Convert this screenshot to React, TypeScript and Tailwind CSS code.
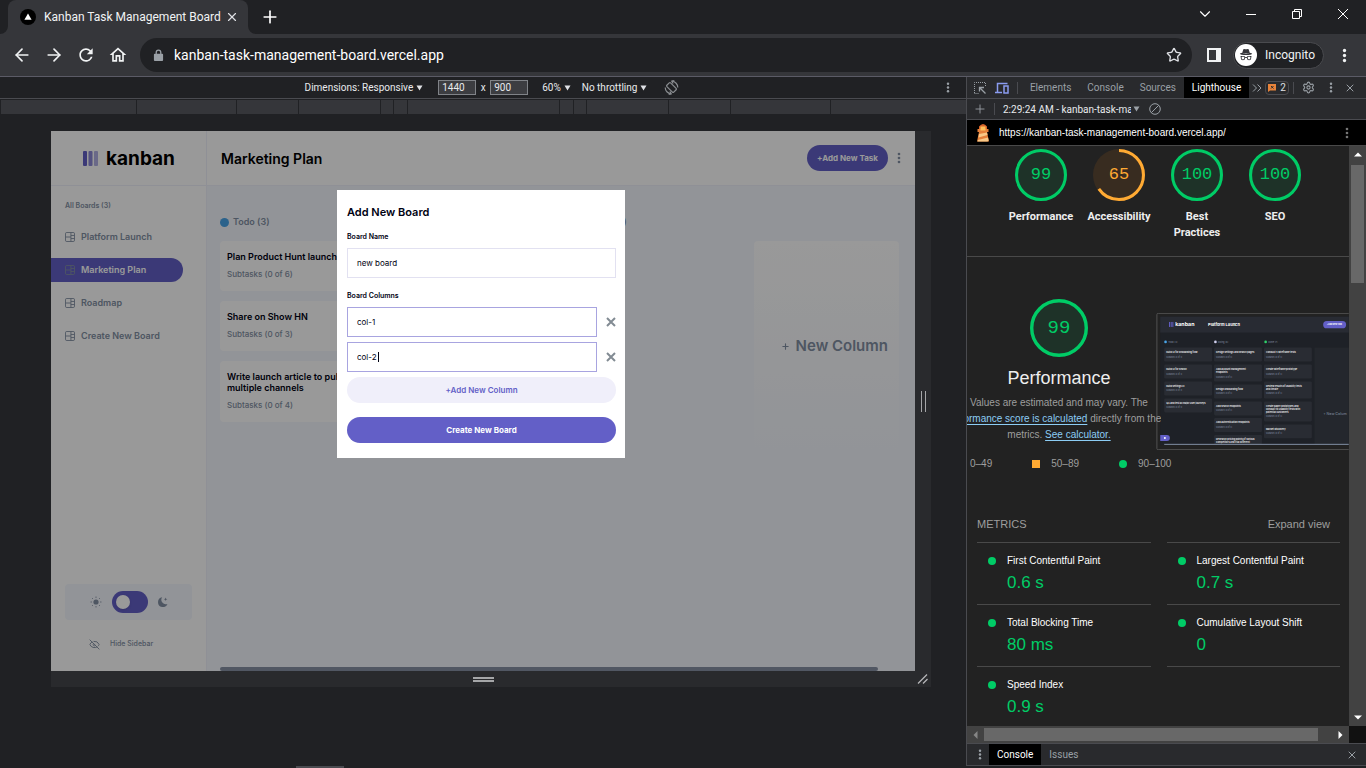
import type { ReactNode } from 'react';
import { ArrowLeft, ArrowRight, ChevronDown, EyeOff, Plus, Settings, Star, X } from 'lucide-react';
import { BsIncognito } from 'react-icons/bs';
import { MdLock, MdOutlineHome, MdRefresh } from 'react-icons/md';

interface Task {
  title: string;
  subtasks: string;
}

interface Metric {
  name: string;
  value: string;
}

const boards = ['Platform Launch', 'Marketing Plan', 'Roadmap', 'Create New Board'];

const tasks: Task[] = [
  { title: 'Plan Product Hunt launch', subtasks: 'Subtasks (0 of 6)' },
  { title: 'Share on Show HN', subtasks: 'Subtasks (0 of 3)' },
  { title: 'Write launch article to publish on multiple channels', subtasks: 'Subtasks (0 of 4)' },
];

const rulerSegments = [137, 100, 62, 82, 12, 13, 153, 13, 12, 82, 62, 100, 137];

const leftMetrics: Metric[] = [
  { name: 'First Contentful Paint', value: '0.6 s' },
  { name: 'Total Blocking Time', value: '80 ms' },
  { name: 'Speed Index', value: '0.9 s' },
];

const rightMetrics: Metric[] = [
  { name: 'Largest Contentful Paint', value: '0.7 s' },
  { name: 'Cumulative Layout Shift', value: '0' },
];

function Dots({ className, r = 2 }: { className: string; r?: number }) {
  return (
    <svg viewBox="0 0 6 18" className={className} fill="currentColor">
      <circle cx="3" cy="3" r={r} />
      <circle cx="3" cy="9" r={r} />
      <circle cx="3" cy="15" r={r} />
    </svg>
  );
}

function Caret({ className = 'text-[#dfe1e5]' }: { className?: string }) {
  return (
    <svg viewBox="0 0 7 6" className={`h-[6px] w-[7px] shrink-0 ${className}`} fill="currentColor">
      <path d="M0.5 0.5h6L3.5 5.5z" />
    </svg>
  );
}

/* ---------- Browser chrome ---------- */

function TabStrip() {
  return (
    <div className="flex h-[34px] shrink-0 items-stretch bg-[#202124] pl-2">
      <div className="relative flex w-[240px] items-center rounded-t-lg bg-[#35363a] pl-3 pr-2">
        <svg viewBox="0 0 16 16" className="h-4 w-4 shrink-0">
          <circle cx="8" cy="8" r="8" fill="#000" />
          <path d="M8 4.5l3.6 6.2H4.4z" fill="#fff" />
        </svg>
        <span className="ml-2 flex-1 whitespace-nowrap text-[12px] text-[#f1f3f4]">Kanban Task Management Board</span>
        <button aria-label="Close tab">
          <X className="h-4 w-4 p-px text-[#dfe1e5]" />
        </button>
        <svg viewBox="0 0 8 8" className="absolute -left-2 bottom-0 h-2 w-2" fill="#35363a">
          <path d="M8 0v8H0a8 8 0 0 0 8-8z" />
        </svg>
        <svg viewBox="0 0 8 8" className="absolute -right-2 bottom-0 h-2 w-2" fill="#35363a">
          <path d="M0 0v8h8a8 8 0 0 1-8-8z" />
        </svg>
      </div>
      <button aria-label="New tab" className="ml-3">
        <Plus className="h-5 w-5 text-white" strokeWidth={2} />
      </button>
      <div className="mb-[6px] ml-auto flex items-center text-white">
        <button aria-label="Search tabs" className="flex w-[46px] justify-center">
          <ChevronDown className="h-[18px] w-[18px]" strokeWidth={1.5} />
        </button>
        <button aria-label="Minimize" className="flex w-[46px] justify-center">
          <svg viewBox="0 0 10 10" className="h-[10px] w-[10px]">
            <path d="M0 5.5h10" stroke="currentColor" />
          </svg>
        </button>
        <button aria-label="Restore" className="flex w-[46px] justify-center">
          <svg viewBox="0 0 10 10" className="h-[10px] w-[10px]" fill="none" stroke="currentColor">
            <path d="M0.5 2.5h7v7h-7zM2.5 2.5v-2h7v7h-2" />
          </svg>
        </button>
        <button aria-label="Close window" className="flex w-[46px] justify-center">
          <svg viewBox="0 0 10 10" className="h-[10px] w-[10px]" fill="none" stroke="currentColor">
            <path d="M0 0l10 10M10 0L0 10" />
          </svg>
        </button>
      </div>
    </div>
  );
}

function AddressBar() {
  return (
    <div className="flex h-[43px] shrink-0 items-center border-b border-[#5b5b66] bg-[#35363a] pr-[19px] text-[#f1f3f4]">
      <button aria-label="Back" className="ml-3">
        <ArrowLeft className="h-5 w-5" />
      </button>
      <button aria-label="Forward" className="ml-3">
        <ArrowRight className="h-5 w-5" />
      </button>
      <button aria-label="Reload" className="ml-3">
        <MdRefresh className="h-5 w-5" />
      </button>
      <button aria-label="Home" className="ml-3">
        <MdOutlineHome className="h-5 w-5" />
      </button>
      <div className="ml-3 flex h-[34px] flex-1 items-center rounded-full bg-[#202124] pl-3 pr-[10px]">
        <svg viewBox="0 0 12 14" className="mx-px h-[13px] w-[11px] shrink-0" fill="#9aa0a6">
          <path fillRule="evenodd" d="M6 0.500a3.200 3.200 0 0 0-3.200 3.200V5H2a1 1 0 0 0-1 1v6a1 1 0 0 0 1 1h8a1 1 0 0 0 1-1V6a1 1 0 0 0-1-1h-.8V3.700A3.200 3.200 0 0 0 6 0.500zM4.200 5V3.700a1.800 1.800 0 0 1 3.600 0V5z" />
        </svg>
        <input
          type="text"
          aria-label="Address"
          defaultValue="kanban-task-management-board.vercel.app"
          className="ml-[9px] min-w-0 flex-1 bg-transparent text-[14px] text-white outline-none"
        />
        <button aria-label="Bookmark">
          <Star className="h-4 w-4 text-[#dfe1e5]" />
        </button>
      </div>
      <button aria-label="Side panel" className="ml-[15px]">
        <svg viewBox="0 0 14 14" className="h-[14px] w-[14px]" fill="currentColor">
          <path fillRule="evenodd" d="M0 0h14v14H0zM2 2v10h7V2z" />
        </svg>
      </button>
      <button className="ml-3 flex h-[27px] items-center rounded-full border border-[#4a4b4f] bg-[#202124] pl-px pr-2">
        <span className="flex h-[22px] w-[22px] items-center justify-center rounded-full bg-white">
          <BsIncognito className="h-[14px] w-[14px] text-[#35363a]" />
        </span>
        <span className="ml-2 text-[12px]">Incognito</span>
      </button>
      <button aria-label="Menu" className="ml-[18px]">
        <Dots className="h-[15px] w-[5px]" />
      </button>
    </div>
  );
}

/* ---------- Device toolbar ---------- */

function DeviceToolbar() {
  return (
    <div className="flex h-[22px] items-center border-b border-[#4a4b50] bg-[#202124] pr-4 text-[10px] text-[#e8eaed]">
      <div className="flex flex-1 items-center justify-center pl-[38px]">
        <button className="flex items-center gap-[3px]">
          Dimensions: Responsive <Caret />
        </button>
        <input
          type="text"
          aria-label="Width"
          defaultValue="1440"
          className="ml-[15px] h-[15px] w-[38px] border border-[#808388] bg-[#3c3d41] px-[3px] outline-none"
        />
        <span className="w-[14px] text-center">x</span>
        <input
          type="text"
          aria-label="Height"
          defaultValue="900"
          className="h-[15px] w-[38px] border border-[#808388] bg-[#3c3d41] px-[3px] outline-none"
        />
        <button className="ml-[14px] flex items-center gap-[3px]">
          60% <Caret />
        </button>
        <button className="ml-[11px] flex items-center gap-[3px]">
          No throttling <Caret />
        </button>
        <button aria-label="Rotate" className="ml-[17px]">
          <svg viewBox="0 0 16 16" className="h-[15px] w-[15px]" fill="none" stroke="#8a8d91" strokeWidth="1.3">
            <rect x="5.2" y="2.8" width="5.6" height="10.4" rx="1" transform="rotate(-45 8 8)" />
            <path d="M8.500 1.300a6.700 6.700 0 0 1 6.200 6.700M7.500 14.700A6.700 6.700 0 0 1 1.300 8" />
            <path d="M11 0.700L8.300 1.300l1.400 2.400M5 15.300l2.700-.6-1.400-2.400" />
          </svg>
        </button>
      </div>
      <button aria-label="More options">
        <Dots className="h-[11px] w-[4px] text-[#9aa0a6]" />
      </button>
    </div>
  );
}

function Ruler() {
  return (
    <div className="flex h-[15px] gap-px border-l border-[#202124] pt-px">
      {rulerSegments.map((width, i) => (
        <div key={i} className="basis-0 bg-[#35363a]" style={{ flexGrow: width }} />
      ))}
    </div>
  );
}

/* ---------- Kanban app ---------- */

function BoardIcon() {
  return (
    <svg viewBox="0 0 11 11" className="h-[10px] w-[10px] shrink-0" fill="none" stroke="currentColor">
      <rect x="0.5" y="0.5" width="10" height="10" rx="1.5" />
      <path d="M6.500 0.500v10M0.500 5.500h6M6.500 3.800h4M6.500 7.200h4" />
    </svg>
  );
}

function Sidebar() {
  return (
    <aside className="flex w-[156px] shrink-0 flex-col border-r border-[#eef1fa] bg-white text-[#828fa3]">
      <div className="flex h-[55px] items-center border-b border-[#eef1fa] pl-8">
        <svg viewBox="0 0 15 15" className="h-[15px] w-[15px]">
          <rect width="4" height="15" rx="1" fill="#635fc7" />
          <rect x="5.5" width="4" height="15" rx="1" fill="#635fc7" opacity="0.75" />
          <rect x="11" width="4" height="15" rx="1" fill="#635fc7" opacity="0.5" />
        </svg>
        <span className="ml-2 text-[19px] font-bold leading-none text-black">kanban</span>
      </div>
      <h2 className="mt-[14px] pl-[14px] text-[7px] font-semibold leading-[12px]">All Boards (3)</h2>
      <nav className="mt-[13px] flex flex-col gap-[9px] pr-[23px]">
        {boards.map((name) => (
          <a
            key={name}
            href="#"
            className={`flex h-6 items-center gap-[6px] pl-[14px] text-[9px] font-semibold ${
              name === 'Marketing Plan' ? 'rounded-r-full bg-[#635fc7] text-white' : ''
            }`}
          >
            <span className={name === 'Marketing Plan' ? 'text-[#828fa3]' : ''}>
              <BoardIcon />
            </span>
            {name}
          </a>
        ))}
      </nav>
      <div className="mx-[14px] mt-auto flex h-9 items-center justify-center gap-[10px] rounded bg-[#f4f7fd]">
        <svg viewBox="0 0 12 12" className="h-3 w-3" fill="none" stroke="#828fa3" strokeLinecap="round">
          <circle cx="6" cy="6" r="2.6" fill="#828fa3" stroke="none" />
          <path d="M6 1v.4M6 10.6v.4M1 6h.4M10.6 6h.4M2.5 2.5l.2.2M9.3 9.3l.2.2M9.5 2.5l-.2.2M2.7 9.3l-.2.2" />
        </svg>
        <button role="switch" aria-checked="false" aria-label="Dark mode" className="flex h-[22px] w-9 items-center rounded-full bg-[#635fc7] pl-1">
          <span className="h-[14px] w-[14px] rounded-full bg-white shadow" />
        </button>
        <svg viewBox="0 0 10 10" className="h-[10px] w-[10px]" fill="#828fa3">
          <path d="M4.2 0.3a4.9 4.9 0 1 0 5.3 6.6A4.4 4.4 0 0 1 4.2 0.3z" />
          <path d="M7.6 0.6l.5 1.2 1.3.5-1.3.5-.5 1.2-.5-1.2-1.2-.5 1.2-.5z" />
        </svg>
      </div>
      <button className="mb-5 ml-[38px] mt-[17px] flex items-center gap-[10px] text-[7px] font-medium leading-[14px]">
        <EyeOff className="h-[11px] w-[11px]" />
        Hide Sidebar
      </button>
    </aside>
  );
}

function Board() {
  return (
    <div className="flex min-w-0 flex-1 flex-col">
      <header className="flex h-[55px] shrink-0 items-center border-b border-[#eef1fa] bg-white px-[14px]">
        <h1 className="text-[14px] font-semibold text-black">Marketing Plan</h1>
        <button className="ml-auto h-[26px] w-[81px] rounded-full bg-[#635fc7] text-[8px] font-bold text-white">
          +Add New Task
        </button>
        <button aria-label="Board options" className="ml-[9px]">
          <Dots className="h-3 w-1 text-[#828fa3]" />
        </button>
      </header>
      <main className="flex flex-1 flex-col overflow-hidden bg-[#f4f7fd] pl-[13px]">
        <div className="flex flex-1 gap-[10px] pr-4">
          <section className="w-[168px] shrink-0">
            <h2 className="mt-[30px] flex items-center gap-1 text-[9px] font-semibold leading-[12px] text-[#828fa3]">
              <span className="h-[9px] w-[9px] rounded-full bg-[#49a4e8]" />
              Todo (3)
            </h2>
            <div className="mt-[13px] flex flex-col gap-[10px]">
              {tasks.map((task) => (
                <article key={task.title} className="rounded bg-white px-[7px] pb-[11px] pt-[10px]">
                  <h3 className="text-[9px] font-semibold leading-[11px] text-[#000112]">{task.title}</h3>
                  <p className="mt-[6px] text-[8px] font-medium leading-[12px] text-[#828fa3]">{task.subtasks}</p>
                </article>
              ))}
            </div>
          </section>
          <section className="w-[168px] shrink-0" />
          <section className="w-[168px] shrink-0">
            <h2 className="mt-[30px] flex items-center gap-1 text-[9px] font-semibold leading-[12px] text-[#828fa3]">
              <span className="h-[9px] w-[9px] rounded-full bg-[#67e2ae]" />
              Done (3)
            </h2>
          </section>
          <button className="mt-[55px] flex h-[210px] min-w-0 flex-1 items-center justify-end gap-[6px] rounded bg-linear-to-b from-white to-[#f4f7fd] pr-[11px] text-[15px] font-semibold text-[#828fa3]">
            <Plus className="h-[9px] w-[9px]" strokeWidth={3} />
            New Column
          </button>
        </div>
        <div className="mr-[37px] h-1 rounded-full bg-[#8791a5]" />
      </main>
    </div>
  );
}

function ColumnField({ value, editing }: { value: string; editing?: boolean }) {
  return (
    <div className="relative flex items-center gap-[9px]">
      <input
        type="text"
        aria-label="Column name"
        defaultValue={value}
        className="h-[30px] min-w-0 flex-1 border border-[#a8a4e0] px-[9px] text-[8px] text-[#000112] outline-none"
      />
      {editing && <span className="absolute left-[31px] top-[10px] h-[10px] w-px bg-[#000112]" />}
      <button type="button" aria-label="Remove column">
        <svg viewBox="0 0 10 10" className="h-[10px] w-[10px]" stroke="#828b93" strokeWidth="2">
          <path d="M1 1l8 8M9 1L1 9" />
        </svg>
      </button>
    </div>
  );
}

function AddBoardDialog() {
  return (
    <form className="mr-1 mt-[59px] flex h-[268px] w-[288px] flex-col bg-white pl-[10px] pr-[9px] pt-[14px] text-[#000112]">
      <h2 className="text-[11px] font-semibold leading-4">Add New Board</h2>
      <label htmlFor="board-name" className="mt-[11px] text-[7px] font-semibold leading-[12px]">
        Board Name
      </label>
      <input
        id="board-name"
        type="text"
        defaultValue="new board"
        className="mt-[5px] h-[30px] shrink-0 border border-[#e2e1f1] px-[9px] text-[8px] outline-none"
      />
      <fieldset className="mt-[12px]">
        <legend className="text-[7px] font-semibold leading-[12px]">Board Columns</legend>
        <div className="mt-[5px] flex flex-col gap-[5px]">
          <ColumnField value="col-1" />
          <ColumnField value="col-2" editing />
        </div>
      </fieldset>
      <button type="button" className="mt-[5px] h-[26px] shrink-0 rounded-full bg-[#f0effa] text-[8px] font-semibold text-[#635fc7]">
        +Add New Column
      </button>
      <button type="submit" className="mt-[14px] h-[26px] shrink-0 rounded-full bg-[#635fc7] text-[8px] font-bold text-white">
        Create New Board
      </button>
    </form>
  );
}

function DeviceFrame() {
  return (
    <div className="ml-[51px] mr-[35px] mt-[17px] bg-[#292a2d]">
      <div className="flex">
        <div className="relative flex h-[540px] min-w-0 flex-1 font-['Inter','Liberation_Sans',sans-serif]">
          <Sidebar />
          <Board />
          <div className="absolute inset-0 flex items-start justify-center bg-black/40">
            <AddBoardDialog />
          </div>
        </div>
        <div className="flex w-4 items-center justify-center gap-px">
          <span className="h-[21px] w-px bg-[#a5a6a8]" />
          <span className="h-[21px] w-px" />
          <span className="h-[21px] w-px bg-[#a5a6a8]" />
        </div>
      </div>
      <div className="flex h-4 items-center">
        <div className="flex flex-1 flex-col items-center gap-px">
          <span className="h-[2px] w-[21px] bg-[#a5a6a8]" />
          <span className="h-[2px] w-[21px] bg-[#a5a6a8]" />
        </div>
        <svg viewBox="0 0 16 16" className="h-4 w-4" stroke="#b4b5b7" strokeWidth="1.3">
          <path d="M3 12.5L12 3.5M8 12.5L12.5 8" />
        </svg>
      </div>
    </div>
  );
}

/* ---------- DevTools ---------- */

function Divider() {
  return <span className="h-3 w-px bg-[#4a4b50]" />;
}

function DevToolsTabs() {
  return (
    <div className="flex h-[22px] shrink-0 items-center border-b border-[#4a4b50] bg-[#292a2d] pl-[7px] pr-[10px] text-[10px] text-[#9aa0a6]">
      <button aria-label="Inspect element">
        <svg viewBox="0 0 12 12" className="h-3 w-3" fill="none" stroke="currentColor">
          <path d="M0.5 11V0.5H11.5V4" strokeDasharray="1 1" />
          <path d="M0.5 11.5H5" strokeDasharray="1 1" />
          <path d="M5.5 9.5V5.5H10M5.5 5.5l6 6" strokeWidth="1.3" />
        </svg>
      </button>
      <button aria-label="Toggle device toolbar" className="ml-[9px] mr-2">
        <svg viewBox="0 0 14 12" className="h-3 w-[14px]" fill="none" stroke="#8a9cf0" strokeWidth="1.5">
          <path d="M2.5 10V1.5H12.5M0 10.5H7" />
          <rect x="9" y="4" width="4" height="7" />
        </svg>
      </button>
      <Divider />
      <div role="tablist" className="flex h-full flex-1 items-stretch pl-1">
        <button role="tab" className="px-2">Elements</button>
        <button role="tab" className="px-2">Console</button>
        <button role="tab" className="px-2">Sources</button>
        <button role="tab" aria-selected="true" className="bg-black px-2 text-white">
          Lighthouse
        </button>
        <button aria-label="More tabs" className="px-[3px]">
          <svg viewBox="0 0 10 8" className="h-2 w-[10px]" fill="none" stroke="currentColor">
            <path d="M1 0.5L4.5 4L1 7.5M5.5 0.5L9 4L5.5 7.5" />
          </svg>
        </button>
      </div>
      <button className="flex h-[14px] w-[26px] items-center justify-center gap-1 rounded-sm border border-[#4a4b50] text-[#dfe1e5]">
        <svg viewBox="0 0 8 8" className="h-2 w-2">
          <path d="M0 0h8v6.5H2L0 8z" fill="#e8833a" />
          <path d="M3 2l2.5 2.5M5.5 2L3 4.5" stroke="#292a2d" />
        </svg>
        2
      </button>
      <span className="ml-1 h-3 w-px bg-[#4a4b50]" />
      <button aria-label="Settings" className="ml-[8px]">
        <Settings className="h-[13px] w-[13px]" />
      </button>
      <button aria-label="Customize" className="ml-[14px]">
        <Dots className="h-[11px] w-[4px]" />
      </button>
      <button aria-label="Close DevTools" className="ml-[11px]">
        <X className="h-3 w-3" />
      </button>
    </div>
  );
}

function Gauge({ score, color, fill, className, textClass }: {
  score: number;
  color: string;
  fill: string;
  className: string;
  textClass: string;
}) {
  const length = 2 * Math.PI * 48;
  return (
    <div className={`relative flex items-center justify-center ${className}`}>
      <svg viewBox="0 0 102 102" className="absolute inset-0 h-full w-full -rotate-90">
        <circle cx="51" cy="51" r="51" fill={fill} />
        <circle
          cx="51"
          cy="51"
          r="48"
          fill="none"
          stroke={color}
          strokeWidth="6"
          strokeDasharray={`${(score > 98 ? 1 : score / 100) * length} ${length}`}
        />
      </svg>
      <span className={`relative font-['Liberation_Mono',monospace] ${textClass}`} style={{ color }}>
        {score}
      </span>
    </div>
  );
}

const GREEN = '#00cc66';
const GREEN_FILL = '#1e3228';

function ScoreGauge({ score, children }: { score: number; children: ReactNode }) {
  const orange = score < 90;
  return (
    <a href="#" className="flex w-[78px] flex-col items-center">
      <Gauge
        score={score}
        color={orange ? '#ffaa33' : GREEN}
        fill={orange ? '#382c20' : GREEN_FILL}
        className="h-[52px] w-[52px]"
        textClass="text-[17px]"
      />
      <span className="mt-2 text-center font-['Roboto',sans-serif] text-[11px] font-bold leading-4 text-[#eeeeee]">{children}</span>
    </a>
  );
}

const thumbCards = [
  { x: 594, items: [[174, 'Build UI for onboarding flow'], [225, 'Build UI for search'], [276, 'Build settings UI'], [327, 'QA and test all major user journeys']] },
  { x: 744, items: [[174, 'Design settings and search pages'], [225, 'Add account management|endpoints'], [285, 'Design onboarding flow'], [336, 'Add search endpoints'], [386, 'Add authentication endpoints'], [437, 'Research pricing points of various|competitors and trial different']] },
  { x: 894, items: [[174, 'Conduct 5 wireframe tests'], [225, 'Create wireframe prototype'], [276, 'Review results of usability tests|and iterate'], [336, 'Create paper prototypes and|conduct 10 usability tests with|potential customers'], [405, 'Market discovery']] },
] as { x: number; items: [number, string][] }[];

function Screenshot() {
  return (
    <svg viewBox="570 70 579 412" className="h-[137px] w-[193px] shrink-0 font-['Inter',sans-serif]">
      <path d="M1149 71H576q-4 0-4 4v403q0 3 4 3h573" fill="#222222" stroke="#525252" strokeWidth="3" />
      <rect x="582" y="81" width="567" height="386" fill="#1e2127" />
      <rect x="582" y="81" width="567" height="48" fill="#282b33" />
      <path d="M610 97v15M615 97v15M620 97v15" stroke="#635fc7" strokeWidth="3" />
      <text x="627" y="110" fontSize="16" fontWeight="700" fill="#ffffff">kanban</text>
      <text x="726" y="108" fontSize="12" fontWeight="700" fill="#ffffff">Platform Launch</text>
      <rect x="1072" y="94" width="69" height="22" rx="11" fill="#635fc7" />
      <text x="1083" y="107" fontSize="6" fontWeight="700" fill="#ffffff">+Add New Task</text>
      <g fontSize="7" fill="#828fa3">
        <circle cx="598" cy="157" r="4" fill="#49a4e8" />
        <text x="606" y="160">Todo (4)</text>
        <circle cx="748" cy="157" r="4" fill="#d0d0ee" />
        <text x="756" y="160">Doing (6)</text>
        <circle cx="899" cy="157" r="4" fill="#2fd06a" />
        <text x="907" y="160">Done (7)</text>
      </g>
      {thumbCards.map((column) =>
        column.items.map(([y, title]) => {
          const lines = title.split('|');
          const height = 33 + lines.length * 9;
          return (
            <g key={title}>
              <rect x={column.x} y={y} width="144" height={Math.min(height, 465 - y)} rx="4" fill="#292c33" />
              {lines.map((line, i) => (
                <text key={line} x={column.x + 6} y={y + 16 + i * 9} fontSize="7" fontWeight="700" fill="#e4e4e6">
                  {line}
                </text>
              ))}
              {y < 430 && (
                <text x={column.x + 6} y={y + 21 + lines.length * 9} fontSize="6" fill="#828fa3">
                  Subtasks (0 of 3)
                </text>
              )}
            </g>
          );
        })
      )}
      <rect x="1046" y="174" width="103" height="290" fill="#24272d" />
      <text x="1072" y="376" fontSize="11" fontWeight="600" fill="#6b7686">+ New Colum</text>
      <path d="M582 437h20q9 0 9 9t-9 9h-20z" fill="#635fc7" />
      <circle cx="596" cy="446" r="3" fill="#ffffff" />
      <path d="M594 465h555" stroke="#828fa3" strokeWidth="3" />
    </svg>
  );
}

function MetricList({ metrics, closed }: { metrics: Metric[]; closed?: boolean }) {
  return (
    <div className={`flex-1 self-start ${closed ? 'border-b border-[#494949]' : ''}`}>
      {metrics.map((metric) => (
        <div key={metric.name} className="flex h-[62px] gap-[11px] border-t border-[#494949] pl-[11px] pt-[10px]">
          <span className="mt-1 h-2 w-2 shrink-0 rounded-full bg-[#00cc66]" />
          <div>
            <div className="whitespace-nowrap text-[10px] leading-4 text-white">{metric.name}</div>
            <div className="mt-[2px] text-[17px] leading-6 text-[#00cc66]">{metric.value}</div>
          </div>
        </div>
      ))}
    </div>
  );
}

function Report() {
  return (
    <div className="min-w-0 flex-1 overflow-hidden bg-[#222222] font-['Liberation_Sans',Arial,sans-serif] text-[#9e9e9e]">
      <div className="flex h-[111px] justify-center border-b border-[#494949] pt-[3px]">
        <ScoreGauge score={99}>Performance</ScoreGauge>
        <ScoreGauge score={65}>Accessibility</ScoreGauge>
        <ScoreGauge score={100}>
          Best
          <br />
          Practices
        </ScoreGauge>
        <ScoreGauge score={100}>SEO</ScoreGauge>
      </div>

      <div className="flex items-start pt-[42px]">
        {/* The summary is clipped on both sides, its right end runs over the frame of the screenshot */}
        <div className="relative z-10 flex w-[194px] shrink-0 flex-col items-center overflow-hidden whitespace-nowrap pr-[10px] text-[10px] leading-4">
          <Gauge score={99} color={GREEN} fill={GREEN_FILL} className="h-[58px] w-[58px]" textClass="text-[19px]" />
          <h2 className="mt-[9px] text-[18px] leading-6 text-[#eeeeee]">Performance</h2>
          <p className="mt-[5px]">Values are estimated and may vary. The</p>
          <p>
            <a href="#" className="text-[#8ccdf5] underline underline-offset-2">performance score is calculated</a> directly from these
          </p>
          <p>
            metrics. <a href="#" className="text-[#8ccdf5] underline underline-offset-2">See calculator.</a>
          </p>
        </div>
        <div className="-ml-[5px] mt-[14px]">
          <Screenshot />
        </div>
      </div>

      <div className="mt-[7px] flex items-center pl-[3px] text-[10px] leading-[14px]">
        <span>0–49</span>
        <span className="ml-10 h-2 w-2 bg-[#ffaa33]" />
        <span className="ml-[11px]">50–89</span>
        <span className="ml-10 h-2 w-2 rounded-full bg-[#00cc66]" />
        <span className="ml-[11px]">90–100</span>
      </div>

      <div className="ml-[10px] mr-[9px] mt-[45px]">
        <div className="flex justify-between pr-[10px] text-[11px] leading-4">
          <h3>METRICS</h3>
          <button>Expand view</button>
        </div>
        <div className="mt-[10px] flex gap-4">
          <MetricList metrics={leftMetrics} />
          <MetricList metrics={rightMetrics} closed />
        </div>
      </div>
    </div>
  );
}

function DevTools() {
  return (
    <aside className="flex w-[400px] shrink-0 flex-col border-l border-[#4a4b50] bg-[#292a2d]">
      <DevToolsTabs />
      <div className="flex h-[21px] shrink-0 items-center border-b border-[#4a4b50] pl-[6px] text-[10px] text-[#e8eaed]">
        <button aria-label="New report">
          <Plus className="h-[14px] w-[14px] text-[#9aa0a6]" strokeWidth={1.5} />
        </button>
        <span className="ml-[7px] mr-2 h-3 w-px bg-[#4a4b50]" />
        <button className="flex items-center">
          <span className="w-[128px] overflow-hidden whitespace-nowrap text-left">2:29:24 AM - kanban-task-mar</span>
          <Caret className="ml-[2px] text-[#9aa0a6]" />
        </button>
        <button aria-label="Clear" className="ml-[9px]">
          <svg viewBox="0 0 12 12" className="h-3 w-3" fill="none" stroke="#9aa0a6">
            <circle cx="6" cy="6" r="5.3" />
            <path d="M2.3 9.7l7.4-7.4" />
          </svg>
        </button>
      </div>
      <div className="flex h-[26px] shrink-0 items-center border-b border-[#494949] bg-black pl-[9px] pr-[17px]">
        <svg viewBox="0 0 14 19" className="h-[19px] w-[14px]">
          <path d="M3 3.5Q7-1.500 11 3.500V6H3z" fill="#d9652b" />
          <path d="M1.500 6h11v3h-1.500l2 9.500H1L3 9H1.500z" fill="#e5803a" />
          <path d="M4.500 3.500h5v4h-5z" fill="#ffc05a" />
          <path d="M3 11l8-1.500.5 2.500-9 2.500zM2 17l10-2.500.6 3-1 1H1.500z" fill="#f9c987" />
        </svg>
        <a href="#" className="ml-[9px] flex-1 font-['Liberation_Sans',Arial,sans-serif] text-[10px] text-white">
          https://kanban-task-management-board.vercel.app/
        </a>
        <button aria-label="Report options">
          <Dots className="h-3 w-1 text-[#757575]" />
        </button>
      </div>

      <div className="flex min-h-0 flex-1">
        <Report />
        <div className="flex w-[17px] shrink-0 flex-col items-center bg-[#424242] py-[6px]">
          <svg viewBox="0 0 8 5" className="h-[5px] w-2" fill="#ffffff">
            <path d="M4 0.500L8 4.500H0z" />
          </svg>
          <div className="mt-2 h-[118px] w-[13px] bg-[#686868]" />
          <svg viewBox="0 0 8 5" className="mt-auto h-[5px] w-2" fill="#ffffff">
            <path d="M4 4.500L8 0.500H0z" />
          </svg>
        </div>
      </div>
      <div className="flex h-[18px] shrink-0 border-b border-[#4a4b50]">
        <div className="flex flex-1 items-center justify-between bg-[#424242] px-[6px]">
          <svg viewBox="0 0 5 8" className="h-2 w-[5px]" fill="#868686">
            <path d="M0.500 4L4.500 0v8z" />
          </svg>
          <div className="ml-[6px] mr-5 h-[13px] flex-1 bg-[#686868]" />
          <svg viewBox="0 0 5 8" className="h-2 w-[5px]" fill="#ffffff">
            <path d="M4.500 4L0.500 0v8z" />
          </svg>
        </div>
        <div className="w-[17px] bg-[#111111]" />
      </div>
      <div className="flex h-[22px] shrink-0 items-stretch border-b border-[#4a4b50] pr-2 text-[10px] text-[#9aa0a6]">
        <button aria-label="Drawer menu" className="w-[22px] pl-[11px]">
          <Dots className="h-[11px] w-[4px]" />
        </button>
        <button className="bg-black px-2 text-white">Console</button>
        <button className="px-2">Issues</button>
        <button aria-label="Close drawer" className="ml-auto">
          <X className="h-3 w-3" />
        </button>
      </div>
    </aside>
  );
}

export default function App() {
  return (
    <div className="flex h-screen flex-col overflow-hidden bg-[#202124] font-['Roboto','Noto_Sans',sans-serif]">
      <TabStrip />
      <AddressBar />
      <div className="flex min-h-0 flex-1">
        <div className="flex min-w-0 flex-1 flex-col">
          <DeviceToolbar />
          <Ruler />
          <DeviceFrame />
        </div>
        <DevTools />
      </div>
      <div className="h-[2px] shrink-0 pl-[296px]">
        <div className="h-[2px] w-12 bg-[#4a4b50]" />
      </div>
    </div>
  );
}
